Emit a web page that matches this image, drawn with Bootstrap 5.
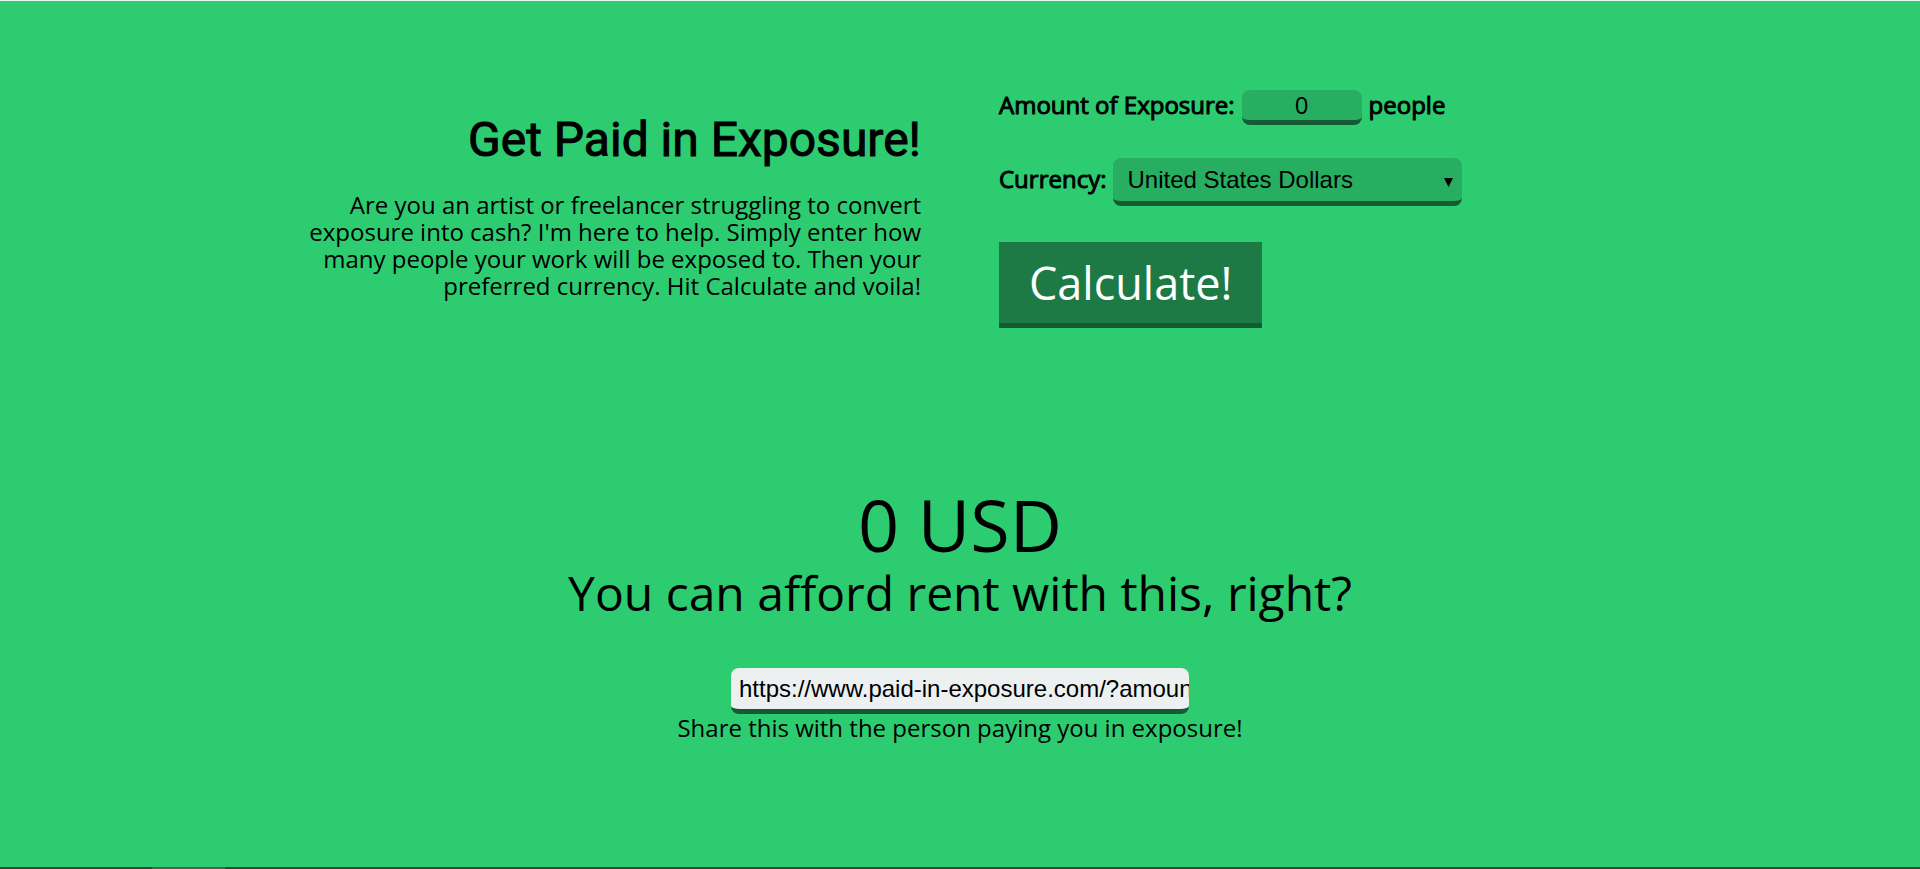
<!DOCTYPE html>
<html lang="en">
<head>
<meta charset="utf-8">
<meta name="viewport" content="width=device-width, initial-scale=1">
<title>Get Paid in Exposure!</title>
<link href="https://cdn.jsdelivr.net/npm/bootstrap@5.3.0/dist/css/bootstrap.min.css" rel="stylesheet">
<style>
  body {
    background: #2ecc71;
    color: #000;
    font-family: "Open Sans", sans-serif;
    font-size: 24px;
    line-height: 27px;
    border-top: 1px solid #e8f8ef;
  }
  .page-title {
    font-family: Roboto, sans-serif;
    font-size: 48px;
    line-height: 56px;
    font-weight: 400;
    -webkit-text-stroke: 1px #000;
    margin-bottom: 23px;
  }
  .intro { padding: 111px 39px 0 0; }
  .intro p { max-width: 624px; }
  .calculator { padding: 89px 0 0 39px; }
  .field-row { gap: 7px; margin-bottom: 33px; }
  .field-label { -webkit-text-stroke: 1px #000; padding-bottom: 7px; }
  .exposure-field {
    color: #000;
    border: 0;
    border-bottom: 5px solid #145a32;
    border-radius: 8px;
    background-color: #27ae60;
    font-family: "Liberation Sans", Arial, sans-serif;
    font-size: 24px;
    line-height: 27px;
    padding: 0;
  }
  .exposure-field:focus {
    color: #000;
    background-color: #27ae60;
    border-color: #145a32;
    box-shadow: 0 0 0 3px #145a32;
  }
  .amount-field {
    width: 120px;
    height: 35px;
    padding-bottom: 2px;
    font-family: "Open Sans", sans-serif;
  }
  .currency-field {
    width: 349px;
    height: 48px;
    padding: 0 40px 0 14px;
    background-image: url("data:image/svg+xml,%3Csvg xmlns='http://www.w3.org/2000/svg' viewBox='0 0 9 9'%3E%3Cpath d='M0 0H9L4.5 9Z'/%3E%3C/svg%3E");
    background-size: 9px 9px;
    background-position: right 9px top 20px;
  }
  .calculate-btn {
    background: #1d7a45;
    color: #fff;
    border: 0;
    border-bottom: 5px solid #145a32;
    border-radius: 0;
    font-size: 45px;
    line-height: 61px;
    padding: 10px 30px;
    margin-top: 3px;
  }
  .calculate-btn:hover { background: #145a32; color: #fff; }
  .payout { padding-top: 155px; padding-bottom: 119px; }
  .payout-amount { font-size: 72px; line-height: 82px; }
  .payout-remark { font-size: 48px; line-height: 56px; margin-bottom: 47px; }
  .share-field, .share-field:focus {
    width: 458px;
    height: 46px;
    padding-left: 8px;
    background-color: #ecf0f1;
  }
  .page-footer {
    height: 2px;
    background: linear-gradient(90deg, transparent 152px, #4c6450 152px 225px, transparent 225px) #34433a;
  }
</style>
</head>
<body class="d-flex flex-column min-vh-100">
<main class="flex-grow-1">
  <div class="row g-0">
    <section class="col-6 intro d-flex flex-column align-items-end text-end">
      <h1 class="page-title">Get Paid in Exposure!</h1>
      <p class="mb-0">Are you an artist or freelancer struggling to convert exposure into cash? I'm here to help. Simply enter how many people your work will be exposed to. Then your preferred currency. Hit Calculate and voila!</p>
    </section>
    <form class="col-6 calculator" onsubmit="return false">
      <div class="field-row d-flex align-items-center">
        <label class="field-label" for="amount">Amount of Exposure:</label>
        <input class="form-control exposure-field amount-field text-center" id="amount" type="text" inputmode="numeric" value="0">
        <span class="field-label">people</span>
      </div>
      <div class="field-row d-flex align-items-center">
        <label class="field-label" for="currency">Currency:</label>
        <select class="form-select exposure-field currency-field" id="currency">
          <option>United States Dollars</option>
        </select>
      </div>
      <button class="btn calculate-btn" type="submit">Calculate!</button>
    </form>
  </div>
  <section class="payout d-flex flex-column align-items-center text-center">
    <div class="payout-amount">0 USD</div>
    <div class="payout-remark">You can afford rent with this, right?</div>
    <input class="form-control exposure-field share-field" id="share" type="text" value="https://www.paid-in-exposure.com/?amount=0&amp;currency=USD" readonly>
    <label for="share">Share this with the person paying you in exposure!</label>
  </section>
</main>
<footer class="page-footer"></footer>
<script src="https://cdn.jsdelivr.net/npm/bootstrap@5.3.0/dist/js/bootstrap.bundle.min.js"></script>
</body>
</html>
